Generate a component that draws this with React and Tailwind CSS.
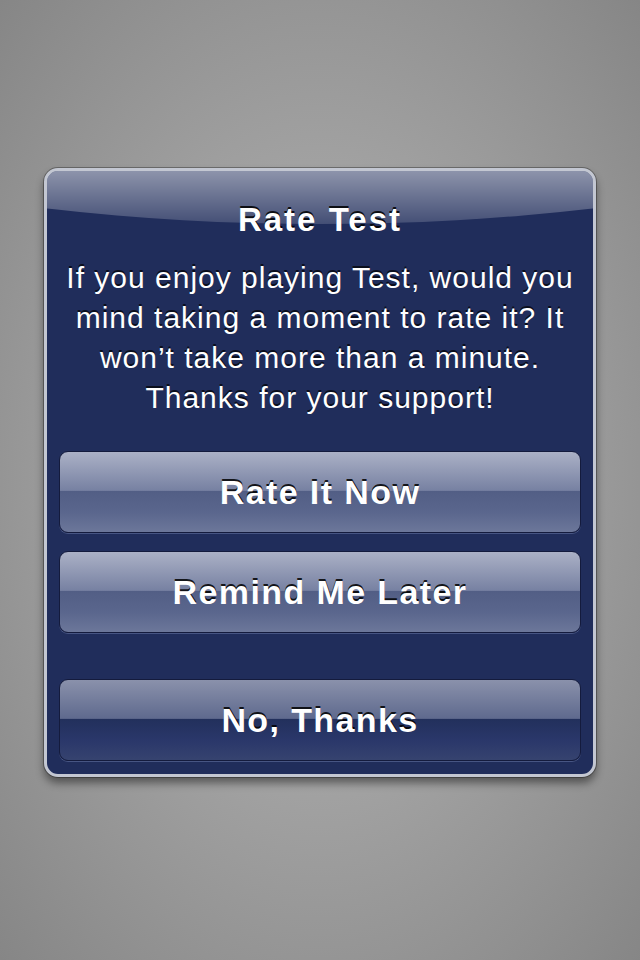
import React from "react";

const buttons = [
  { label: "Rate It Now", dark: false },
  { label: "Remind Me Later", dark: false },
  { label: "No, Thanks", dark: true },
];

const AlertButton = ({ label, dark }) => (
  <button
    className={
      "relative h-[82px] w-full overflow-hidden rounded-[9px] border border-[#141b3d] shadow-[0_1px_0_rgba(120,135,180,0.45)] " +
      (dark
        ? "bg-[linear-gradient(to_bottom,#8a91ab_0%,#5f6a8e_48%,#22305c_49%,#2a376a_75%,#36436f_100%)]"
        : "bg-[linear-gradient(to_bottom,#abb1c6_0%,#7781a2_48%,#525e85_49%,#5a668d_75%,#6c779a_100%)]")
    }
  >
    <span className="relative text-[34px] font-bold tracking-[1.4px] text-white [text-shadow:0_-2px_0_rgba(0,0,0,0.85)]">
      {label}
    </span>
  </button>
);

export default function App() {
  return (
    <div
      className="flex h-[960px] w-[640px] items-start justify-center bg-[radial-gradient(ellipse_at_center,#bcbcbc_0%,#a2a2a2_45%,#868686_100%)] pt-[168px]"
      style={{ fontFamily: '"Liberation Sans", Arial, sans-serif' }}
    >
      {/* --- Alert --- */}
      <div className="relative w-[552px] rounded-[14px] border-[3px] border-[#c3c7d2] bg-[#202d5b] shadow-[0_6px_8px_rgba(0,0,0,0.45),0_0_0_1px_rgba(60,60,60,0.5)]">
        {/* gloss */}
        <div className="pointer-events-none absolute inset-0 overflow-hidden rounded-[11px]">
          <div className="absolute left-[-427px] top-[-341px] h-[394px] w-[1400px] rounded-[50%] bg-[linear-gradient(to_bottom,rgba(255,255,255,0.5)_86%,rgba(255,255,255,0.16)_100%)]" />
        </div>

        <div className="relative flex flex-col px-[12px] pt-[29px] pb-[13px]">
          <h1 className="text-center text-[33px] font-bold leading-[40px] tracking-[2px] text-white [text-shadow:0_-2px_0_rgba(0,0,0,0.85)]">
            Rate Test
          </h1>
          <p className="mt-[18px] text-center text-[30px] leading-[40px] tracking-[1px] text-white [text-shadow:0_-2px_0_rgba(0,0,0,0.7)]">
            If you enjoy playing Test, would you
            <br />
            mind taking a moment to rate it? It
            <br />
            won’t take more than a minute.
            <br />
            Thanks for your support!
          </p>

          <div className="mt-[33px] flex flex-col">
            <AlertButton {...buttons[0]} />
            <div className="mt-[18px]">
              <AlertButton {...buttons[1]} />
            </div>
            <div className="mt-[46px]">
              <AlertButton {...buttons[2]} />
            </div>
          </div>
        </div>
      </div>
    </div>
  );
}
